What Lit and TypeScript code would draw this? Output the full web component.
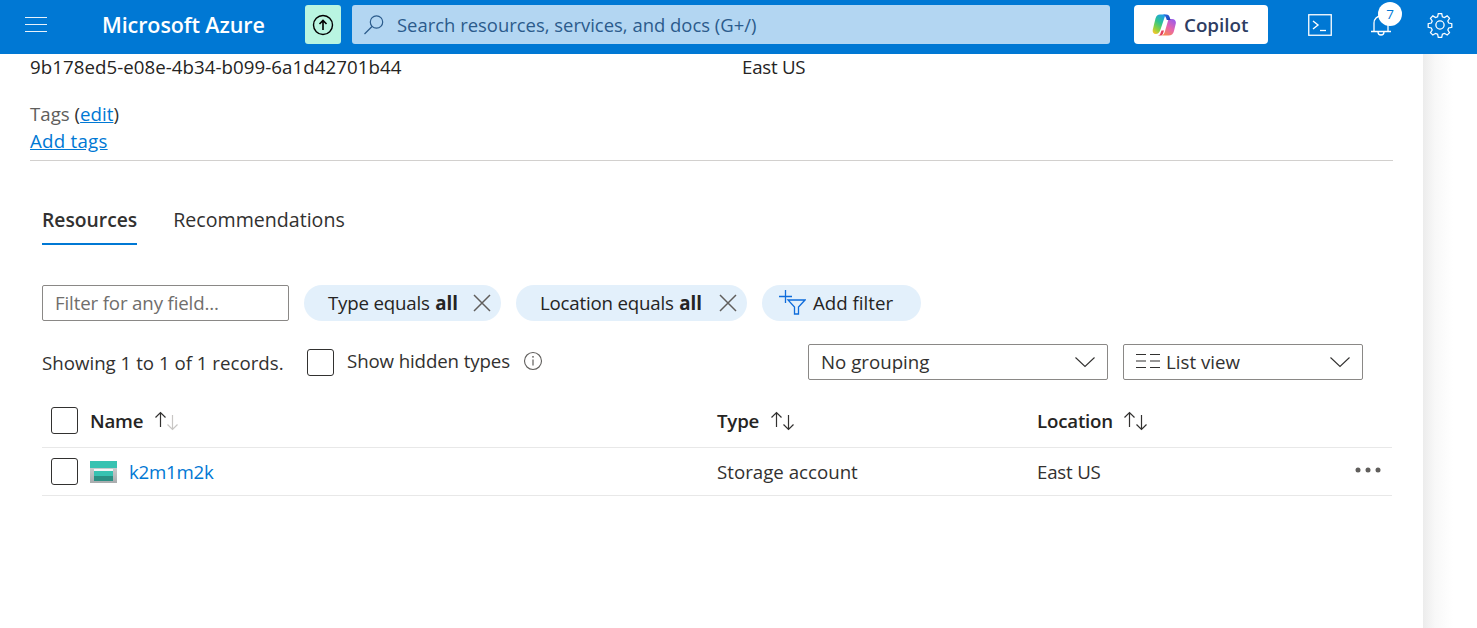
import { LitElement, html, css } from "lit";
import { customElement } from "lit/decorators.js";

const chevron = html`<svg class="chev" width="22" height="12" viewBox="0 0 22 12"><path d="M1.5 1.5 11 10.5 20.5 1.5" fill="none" stroke="#323130" stroke-width="1.1"/></svg>`;
const closeX = html`<svg class="x" width="20" height="20" viewBox="0 0 20 20"><path d="M2 2 18 18M18 2 2 18" stroke="#605e5c" stroke-width="1.5" fill="none"/></svg>`;
const sortIcon = (upDim = false) => html`<svg class="sort" width="26" height="22" viewBox="0 0 26 22">
  <g fill="none" stroke-width="1.2" stroke="#323130"><path d="M6.5 17V3M1.5 7.5 6.5 2.5l5 5"/></g>
  <g fill="none" stroke-width="1.2" stroke="${upDim ? "#c8c6c4" : "#323130"}"><path d="M18.5 5v14.5M13.5 14.5l5 5 5-5"/></g>
</svg>`;

@customElement("app-root")
export class AppRoot extends LitElement {
  static styles = css`
    :host { display: block; width: 1477px; height: 628px; overflow: hidden; background: #fff;
      font-family: "Open Sans", "Noto Sans", sans-serif; font-size: 18.7px; color: #323130; }
    a { color: #0078d4; text-decoration: underline; }
    .plain { text-decoration: none; letter-spacing: -0.25px; }
    .top { height: 54px; box-sizing: border-box; padding-bottom: 5px; background: #0078d4; display: flex; align-items: center; color: #fff; }
    .burger { margin-left: 25px; width: 22px; height: 16px; display: flex; flex-direction: column; justify-content: space-between; }
    .burger i { display: block; height: 1.4px; background: #e8f2fb; }
    .brand { margin-left: 55px; width: 203px; font-size: 21.5px; font-weight: 600; letter-spacing: -0.1px; white-space: nowrap; }
    .up { width: 36px; height: 39px; border-radius: 3px; background: #b9f5e1; display: flex; align-items: center; justify-content: center; }
    .search { margin-left: 11px; width: 758px; height: 39px; border-radius: 3px; background: #b3d6f2; display: flex; align-items: center; color: #2b5b8c; }
    .search svg { margin-left: 11px; }
    .search span { margin-left: 12px; white-space: nowrap; font-size: 18.45px; }
    .copilot { margin-left: 24px; width: 134px; height: 39px; border-radius: 4px; background: #fff; display: flex; align-items: center; color: #2e3d63; font-weight: 600; font-size: 18.8px; }
    .copilot svg { margin-left: 18px; margin-right: 8px; }
    .tools { display: flex; align-items: center; }
    .tool { display: flex; }
    .t1 { margin-left: 40px; }
    .t2 { margin-left: 38px; position: relative; }
    .t3 { margin-left: 35px; }
    .badge { position: absolute; left: 8px; top: -11px; width: 24px; height: 24px; border-radius: 50%; background: #fff; color: #0078d4; font-size: 13.5px; display: flex; align-items: center; justify-content: center; }
    .body { display: flex; height: 574px; }
    .panel { width: 1423px; padding: 0 30px; box-sizing: border-box; }
    .side { flex: 1; background: linear-gradient(90deg, #ececec 0, #f8f8f8 12px, #fff 30px); }
    .info { display: grid; grid-template-columns: 712px 1fr; height: 26px; line-height: 26px; color: #252423; letter-spacing: 0.05px; }
    .loc { letter-spacing: -0.25px; }
    .tags { margin-top: 20px; line-height: 27px; color: #605e5c; }
    .tags a { color: #0078d4; }
    .tags .addtags { letter-spacing: 0.25px; }
    .paren { color: #323130; }
    .rule { margin-top: 6px; height: 1px; background: #d2d0ce; width: 1363px; }
    .inner { padding-left: 12px; }
    .tabs { display: flex; gap: 36px; margin-top: 44px; height: 40px; font-size: 19.6px; }
    .tab { height: 40px; box-sizing: border-box; line-height: 29px; white-space: nowrap; }
    .tab.on { border-bottom: 2px solid #0078d4; font-weight: 600; font-size: 19.3px; }
    .filters { margin-top: 40px; display: flex; align-items: center; height: 36px; }
    .input { width: 247px; height: 36px; box-sizing: border-box; border: 1px solid #8a8886; border-radius: 2px; color: #706e6c; padding: 0 0 2px 12px; display: flex; align-items: center; white-space: nowrap; letter-spacing: -0.15px; }
    .pill { height: 36px; border-radius: 18px; background: #e3f0fb; display: flex; align-items: center; box-sizing: border-box; white-space: nowrap; color: #252423; padding-bottom: 2px; letter-spacing: -0.2px; }
    .p1 { margin-left: 15px; width: 197px; padding-left: 24px; }
    .p2 { margin-left: 15px; width: 231px; padding-left: 24px; }
    .p3 { margin-left: 15px; width: 159px; padding-left: 16px; letter-spacing: 0; }
    .pill b { font-weight: 700; margin-left: 1px; letter-spacing: 0; }
    .x { margin-left: auto; margin-right: 9px; position: relative; top: 1px; }
    .p3 span { margin-left: 7px; }
    .controls { margin-top: 23px; display: flex; align-items: center; height: 36px; }
    .count { width: 265px; white-space: nowrap; }
    .box { width: 27px; height: 27px; box-sizing: border-box; border: 1px solid #323130; border-radius: 3px; background: #fff; flex: none; }
    .hidden { margin-left: 13px; position: relative; top: -2px; white-space: nowrap; letter-spacing: -0.12px; }
    .infoic { margin-left: 13px; display: flex; position: relative; top: -1px; }
    .select { height: 36px; box-sizing: border-box; border: 1px solid #8a8886; border-radius: 2px; display: flex; align-items: center; color: #323130; white-space: nowrap; padding-bottom: 2px; flex: none; }
    .s1 { margin-left: auto; width: 300px; padding-left: 12px; }
    .s2 { margin-left: 15px; width: 240px; padding-left: 12px; margin-right: 30px; }
    .s2 svg.lines { margin-right: 6px; }
    .chev { margin-left: auto; margin-right: 11px; position: relative; top: 1px; }
    .table { margin-top: 20px; width: 1350px; }
    .row { display: grid; grid-template-columns: 48px 627px 320px 1fr; align-items: center; border-bottom: 1px solid #e8e8e8; box-sizing: border-box; }
    .row.head { height: 48px; padding-bottom: 6px; font-weight: 600; color: #252423; letter-spacing: -0.2px; }
    .row.item { height: 48px; }
    .row .box { margin-left: 9px; }
    .cell { display: flex; align-items: center; white-space: nowrap; }
    .tight { letter-spacing: -0.2px; }
    .sort { margin-left: 10.5px; }
    .name svg { margin-right: 12px; }
    .more { margin-left: auto; margin-right: 11px; position: relative; top: -2px; display: flex; }
  `;

  render() {
    return html`
      <div class="top">
        <div class="burger"><i></i><i></i><i></i></div>
        <div class="brand">Microsoft Azure</div>
        <div class="up"><svg width="24" height="24" viewBox="0 0 24 24"><circle cx="12" cy="12" r="9.5" fill="none" stroke="#000" stroke-width="1.4"/><path d="M12 17V7.5M8.5 11 12 7.5l3.5 3.5" fill="none" stroke="#000" stroke-width="1.6"/></svg></div>
        <div class="search">
          <svg width="22" height="22" viewBox="0 0 22 22"><circle cx="13.5" cy="8" r="6.2" fill="none" stroke="#2b5b8c" stroke-width="1.2"/><path d="M9 12.5 1.5 20" stroke="#2b5b8c" stroke-width="1.3"/></svg>
          <span>Search resources, services, and docs (G+/)</span>
        </div>
        <div class="copilot">
          <svg width="24" height="22" viewBox="0 0 24 22">
            <defs>
              <linearGradient id="cg1" x1="0.7" y1="0" x2="0.2" y2="1"><stop offset="0" stop-color="#1f9fe8"/><stop offset=".4" stop-color="#2fc48d"/><stop offset=".75" stop-color="#8fd13f"/><stop offset="1" stop-color="#f7c52e"/></linearGradient>
              <linearGradient id="cg2" x1="0.8" y1="0" x2="0.2" y2="1"><stop offset="0" stop-color="#9a5bea"/><stop offset=".5" stop-color="#e664ad"/><stop offset="1" stop-color="#f98a4a"/></linearGradient>
              <linearGradient id="cg3" x1="0" y1="0" x2="1" y2="1"><stop offset="0" stop-color="#2a6fe0"/><stop offset="1" stop-color="#1c3fb8"/></linearGradient>
            </defs>
            <path d="M8 0.500h5.500L8.500 15.500C7.500 18.500 6 20 3.800 20 1.500 20 .2 18 .8 15.500L3.500 4.500C4.200 2 5.700 .500 8 .500z" fill="url(#cg1)"/>
            <path d="M16.500 5h3.500c2.700 0 4.300 2 3.800 4.500l-1.800 7.500C21.300 20 19.300 21.500 16.500 21.500H9.500C11.500 21 12.300 19.500 12.900 17.500z" fill="url(#cg2)"/>
            <path d="M11 .500h3.500C16.200 .500 17.200 1.600 17.800 3.500L18.500 6H14.800C14 3 13 1.300 11 .500z" fill="url(#cg3)"/>
            <path d="M8 20.500 9.500 16.500h2.500L10.800 20C10.300 21 9.500 21.500 8.500 21.500H6C6.900 21.300 7.600 21 8 20.500z" fill="#e3405c"/>
          </svg>
          <span>Copilot</span>
        </div>
        <div class="tools">
          <div class="tool t1"><svg width="24" height="22" viewBox="0 0 24 22"><rect x=".75" y=".75" width="22.500" height="20.500" fill="none" stroke="#fff" stroke-width="1.3"/><path d="M5 7l5 4-5 4" fill="none" stroke="#fff" stroke-width="1.4"/><path d="M12 16.500h6" stroke="#fff" stroke-width="1.3"/></svg></div>
          <div class="tool t2">
            <svg width="22" height="24" viewBox="0 0 22 24"><path d="M4 18V10c0-4 3-7 7-7s7 3 7 7v8M1 18.500h20M8 19c0 4 6 4 6 0" fill="none" stroke="#fff" stroke-width="1.3"/></svg>
            <div class="badge">7</div>
          </div>
          <div class="tool t3"><svg width="26" height="26" viewBox="0 0 24 24"><path d="M13.6 1.500l.6 2.900 1.900.8 2.500-1.600 2.200 2.200-1.600 2.500.8 1.900 2.900.6v3.300l-2.900.6-.8 1.900 1.600 2.500-2.200 2.200-2.500-1.600-1.900.8-.6 2.900h-3.200l-.6-2.900-1.900-.8-2.500 1.600-2.200-2.200 1.600-2.500-.8-1.900-2.900-.6v-3.300l2.900-.6.8-1.900-1.600-2.500 2.200-2.200 2.500 1.600 1.900-.8.600-2.900z" fill="none" stroke="#fff" stroke-width="1.150"/><circle cx="12" cy="12" r="3.800" fill="none" stroke="#fff" stroke-width="1.200"/></svg></div>
        </div>
      </div>
      <div class="body">
        <div class="panel">
          <div class="info"><div>9b178ed5-e08e-4b34-b099-6a1d42701b44</div><div class="loc">East US</div></div>
          <div class="tags">Tags <span class="paren">(<a href="#">edit</a>)</span><br /><a class="addtags" href="#">Add tags</a></div>
          <div class="rule"></div>
          <div class="inner">
            <div class="tabs"><div class="tab on">Resources</div><div class="tab">Recommendations</div></div>
            <div class="filters">
              <div class="input">Filter for any field...</div>
              <div class="pill p1"><span>Type equals <b>all</b></span>${closeX}</div>
              <div class="pill p2"><span>Location equals <b>all</b></span>${closeX}</div>
              <div class="pill p3">
                <svg width="28" height="26" viewBox="0 0 28 26"><path d="M7.500 1v13M1 7.500h13" stroke="#0f6cdb" stroke-width="1.300" fill="none"/><path d="M10 11h17l-6.500 7v7h-4v-7z" fill="none" stroke="#0f6cdb" stroke-width="1.300"/></svg>
                <span>Add filter</span>
              </div>
            </div>
            <div class="controls">
              <div class="count">Showing 1 to 1 of 1 records.</div>
              <div class="box"></div>
              <div class="hidden">Show hidden types</div>
              <div class="infoic"><svg width="20" height="20" viewBox="0 0 20 20"><circle cx="10" cy="10" r="8.500" fill="none" stroke="#605e5c" stroke-width="1.100"/><path d="M10 8.500v6" stroke="#605e5c" stroke-width="1.200"/><circle cx="10" cy="5.800" r=".9" fill="#605e5c"/></svg></div>
              <div class="select s1">No grouping${chevron}</div>
              <div class="select s2">
                <svg class="lines" width="24" height="16" viewBox="0 0 24 16"><path d="M0 1.500h10M0 8h10M0 14.500h10M14 1.500h10M14 8h10M14 14.500h10" stroke="#323130" stroke-width="1.200"/></svg>
                List view${chevron}
              </div>
            </div>
            <div class="table">
              <div class="row head">
                <div class="box"></div>
                <div class="cell">Name${sortIcon(true)}</div>
                <div class="cell">Type${sortIcon()}</div>
                <div class="cell">Location${sortIcon()}</div>
              </div>
              <div class="row item">
                <div class="box"></div>
                <div class="cell name">
                  <svg width="27" height="22" viewBox="0 0 27 22">
                    <defs><linearGradient id="sg" x1="0" y1="0" x2="0" y2="1"><stop offset="0" stop-color="#d8dadb"/><stop offset="1" stop-color="#a8abad"/></linearGradient></defs>
                    <rect x="0" y="0" width="27" height="22" fill="url(#sg)"/>
                    <rect x="0" y="0" width="27" height="7" fill="#37c2b1"/>
                    <rect x="4" y="8" width="19" height="2" fill="#f4f6f6"/>
                    <rect x="4" y="10" width="19" height="5" fill="#37c2b1"/>
                    <rect x="4" y="15" width="19" height="5" fill="#2a8f83"/>
                  </svg>
                  <a class="plain" href="#">k2m1m2k</a>
                </div>
                <div class="cell">Storage account</div>
                <div class="cell tight">East US
                  <div class="more"><svg width="26" height="6" viewBox="0 0 26 6"><circle cx="3" cy="3" r="2.500" fill="#605e5c"/><circle cx="13" cy="3" r="2.500" fill="#605e5c"/><circle cx="23" cy="3" r="2.500" fill="#605e5c"/></svg></div>
                </div>
              </div>
            </div>
          </div>
        </div>
        <div class="side"></div>
      </div>
    `;
  }
}
